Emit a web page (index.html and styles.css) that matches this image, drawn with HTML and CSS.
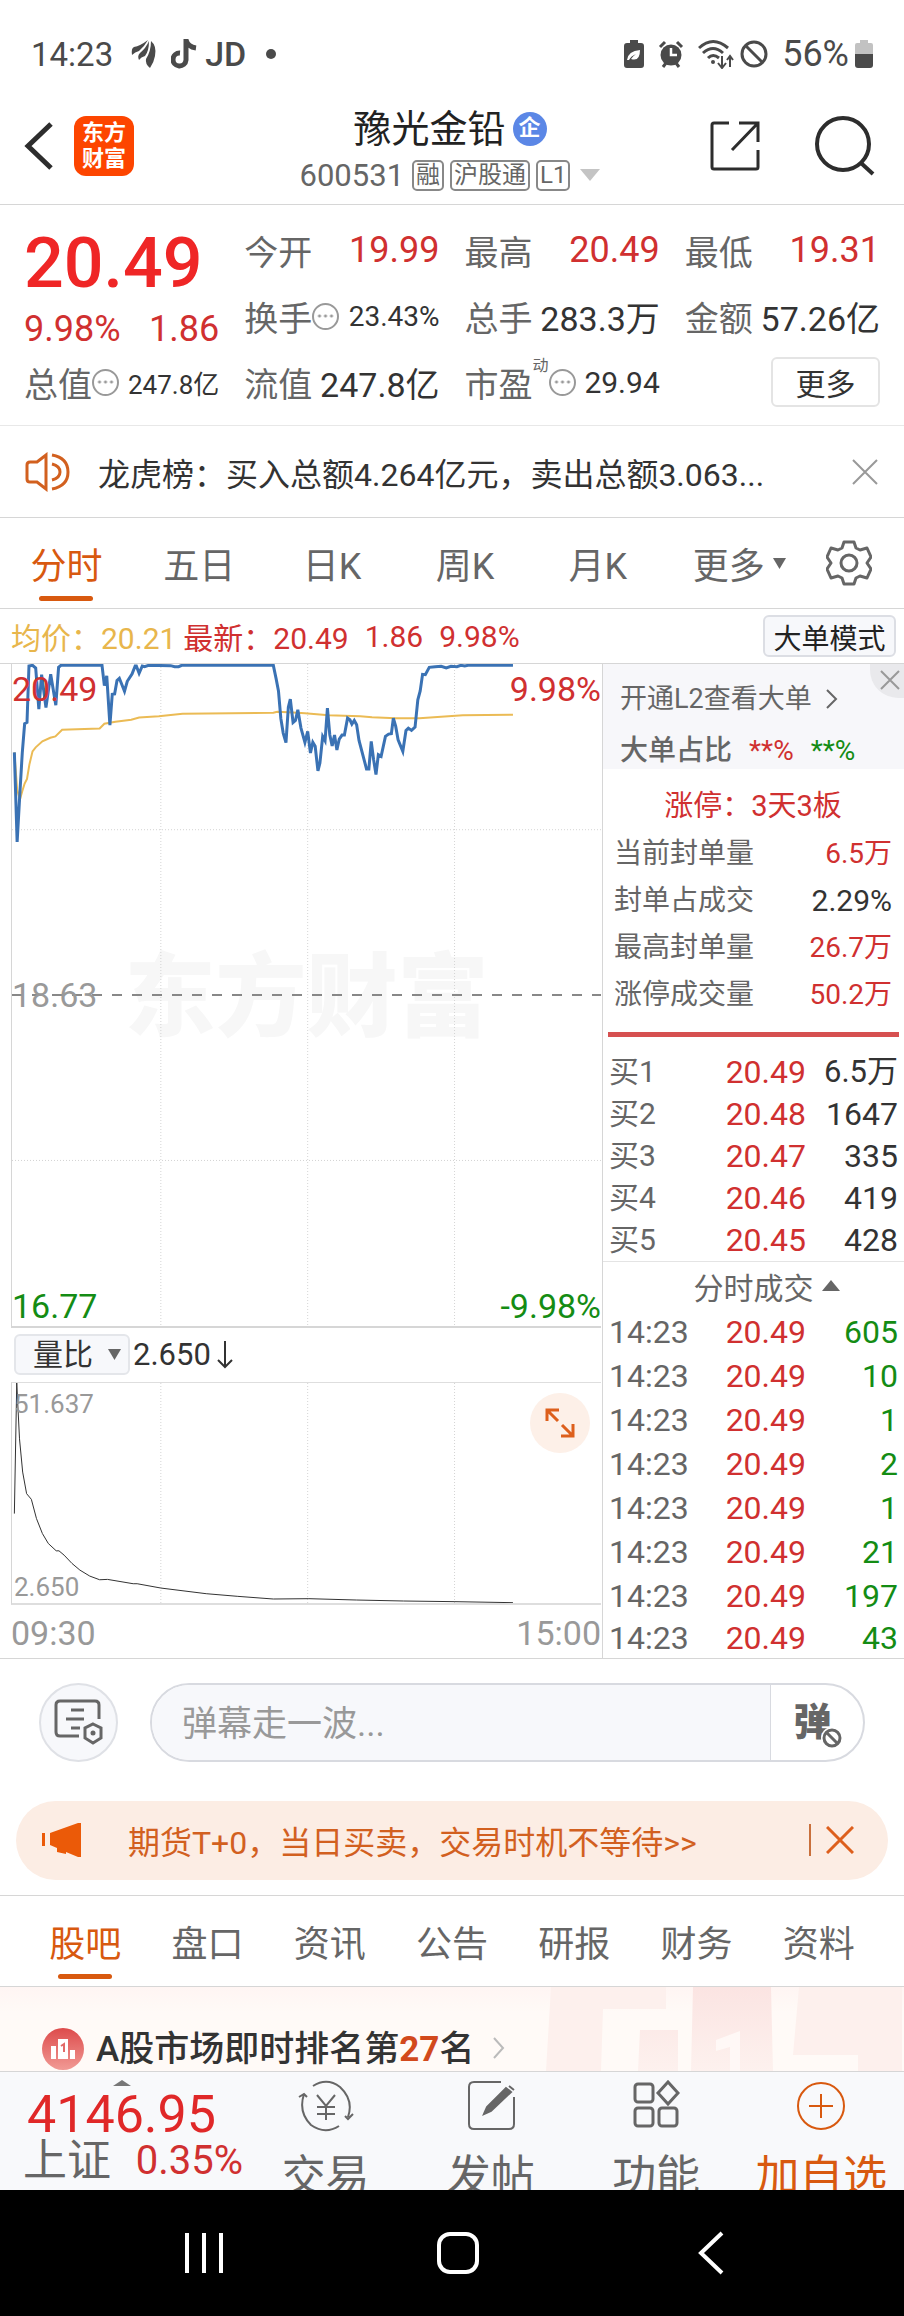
FILE: index.html
```html
<!DOCTYPE html>
<html lang="zh-CN">
<head>
  <meta charset="utf-8">
  <meta name="viewport" content="width=device-width, initial-scale=1">
  <title>豫光金铅 600531</title>
  <link rel="stylesheet" href="styles.css">
</head>
<body>
  <div class="status-bar">
    <span>14:23</span>
    <svg class="st-wing" width="26" height="30" viewBox="0 0 26 30" fill="#4a4a4a"><path d="M1 16Q0 9 3 8Q9 7 17 1Q13 8 8 12Q4 13 1 16zM8 21Q6 17 9 14Q15 9 18 2Q18 12 14 17Q10 18 8 21zM19 29Q14 25 15 20Q20 12 20 2Q26 7 24 17Q23 23 19 29z"/></svg>
    <svg class="st-note" width="26" height="30" viewBox="0 0 26 30" fill="none" stroke="#4a4a4a" stroke-width="5"><path d="M15 0v21a6.500 6.500 0 1 1-6-7M15 1q2 7 10 8"/></svg>
    <b class="st-jd">JD</b>
    <span class="st-dot"></span>
    <div class="status-right">
      <svg width="20" height="28" viewBox="0 0 20 28"><path d="M6 0h8v3h3q3 0 3 3v19q0 3-3 3H3q-3 0-3-3V6q0-3 3-3h3z" fill="#4a4a4a"/><path d="M3 20q1-9 13-10q0 12-9 9q2-3 5-5q-5 2-7 6z" fill="#fff"/></svg>
      <svg width="26" height="28" viewBox="0 0 26 28"><circle cx="13" cy="15" r="10.500" fill="#4a4a4a"/><path d="M2 7l5-5M24 7l-5-5M5 27l3-4M21 27l-3-4" stroke="#4a4a4a" stroke-width="3"/><path d="M13 8v7h6" stroke="#fff" stroke-width="2.500" fill="none"/></svg>
      <svg width="36" height="30" viewBox="0 0 36 30" fill="none" stroke="#4a4a4a" stroke-width="3"><path d="M1 9q14-13 29 0M5 14q10-9 20 0M10 19q5-5 11 0"/><circle cx="15" cy="23" r="2" fill="#4a4a4a" stroke="none"/><path d="M24 17v11M20 24l4 5 4-5M32 28V17M29 21l3-4 3 4" stroke-width="2"/></svg>
      <svg class="st-ban" width="28" height="28" viewBox="0 0 28 28" fill="none" stroke="#4a4a4a" stroke-width="3"><circle cx="14" cy="14" r="12"/><path d="M6 6l16 16"/></svg>
      <span class="st-pct">56%</span>
      <svg width="18" height="28" viewBox="0 0 18 28"><path d="M5 0h8v3h3q2 0 2 2v9H0V5q0-2 2-2h3z" fill="#c2c2c2"/><path d="M0 14h18v11q0 3-3 3H3q-3 0-3-3z" fill="#4a4a4a"/></svg>
    </div>
  </div>

  <header class="header">
    <div class="header-side">
      <button class="icon-btn" aria-label="返回"><svg width="30" height="50" viewBox="0 0 30 50" fill="none" stroke="#2d2d2d" stroke-width="5"><path d="M27 3L4 25l23 22"/></svg></button>
      <a class="logo" href="#">东方<br>财富</a>
    </div>
    <div class="header-title">
      <h1>豫光金铅<span class="badge">企</span></h1>
      <div class="code-row">600531<span class="tag">融</span><span class="tag">沪股通</span><span class="tag">L1</span>
        <svg class="code-caret" width="20" height="12" viewBox="0 0 20 12"><path d="M0 0h20L10 12z" fill="#c4c4c4"/></svg>
      </div>
    </div>
    <div class="header-side header-right">
      <button class="icon-btn" aria-label="分享"><svg width="50" height="50" viewBox="0 0 50 50" fill="none" stroke="#2d2d2d" stroke-width="3"><path d="M19 2H4q-2 0-2 2v42q0 2 2 2h42q2 0 2-2V29M29 2h19v19M48 2L22 29"/></svg></button>
      <button class="icon-btn" aria-label="搜索"><svg width="62" height="60" viewBox="0 0 62 60" fill="none" stroke="#2d2d2d" stroke-width="4"><circle cx="29" cy="28" r="26"/><path d="M47 47l12 11"/></svg></button>
    </div>
  </header>

  <section class="quote">
    <div class="quote-main">
      <div class="price">20.49</div>
      <div class="change"><span>9.98%</span><span>1.86</span></div>
    </div>
    <div class="cell"><span>今开</span><b class="red">19.99</b></div>
    <div class="cell"><span>最高</span><b class="red">20.49</b></div>
    <div class="cell"><span>最低</span><b class="red">19.31</b></div>
    <div class="cell"><span>换手<i class="info"></i></span><b class="small">23.43%</b></div>
    <div class="cell"><span>总手</span><b class="mid">283.3万</b></div>
    <div class="cell"><span>金额</span><b class="mid">57.26亿</b></div>
    <div class="cell"><span>总值<i class="info"></i></span><b class="tiny">247.8亿</b></div>
    <div class="cell"><span>流值</span><b class="mid">247.8亿</b></div>
    <div class="cell"><span>市盈<sup>动</sup><i class="info"></i></span><b class="pe">29.94</b></div>
    <div class="cell cell-more"><button class="more-btn">更多</button></div>
  </section>

  <div class="notice">
    <svg width="46" height="40" viewBox="0 0 46 40" fill="none" stroke="#d2601f" stroke-width="3"><path d="M21 3v34l-9-7H5q-3 0-3-3V13q0-3 3-3h7zM27 3q16 3 16 17T27 37M27 12q8 2 8 8t-8 8"/></svg>
    <a href="#">龙虎榜：买入总额4.264亿元，卖出总额3.063...</a>
    <button class="icon-btn" aria-label="关闭"><svg width="26" height="26" viewBox="0 0 26 26" stroke="#999" stroke-width="2"><path d="M1 1l24 24M25 1L1 25"/></svg></button>
  </div>

  <nav class="period-tabs">
    <button class="tab active">分时</button>
    <button class="tab">五日</button>
    <button class="tab">日K</button>
    <button class="tab">周K</button>
    <button class="tab">月K</button>
    <button class="tab tab-more">更多<svg width="13" height="11" viewBox="0 0 13 11"><path d="M0 0h13L6.500 11z" fill="#666"/></svg></button>
    <button class="tab-gear" aria-label="设置"><svg width="46" height="46" viewBox="0 0 46 46" fill="none" stroke="#666" stroke-width="3" stroke-linejoin="round"><path d="M18 2h10l2 6 4 2 7-2 4 9-4 6 4 6-4 9-7-2-4 2-2 6H18l-2-6-4-2-7 2-4-9 4-6-4-6 4-9 7 2 4-2z"/><circle cx="23" cy="23" r="8"/></svg></button>
  </nav>

  <div class="avg-row">
    <span class="yellow">均价：20.21</span>
    <span class="red">最新：20.49</span>
    <span class="red">1.86</span>
    <span class="red">9.98%</span>
    <button class="mode-btn">大单模式</button>
  </div>

  <main class="market">
    <div class="charts">
      <div class="chart price-chart">
        <span class="watermark">东方财富</span>
        <svg class="plot" viewBox="28 72 1492 1992" preserveAspectRatio="none" fill="none">
          <g class="grid-lines">
            <path d="M405 72V2064M777 72V2064M1149 72V2064M28 571H1520M28 1567H1520"/>
          </g>
          <path class="base-line" d="M28 1069H1520"/>
          <polyline class="avg-line" points="34,338 41,450 48,480 54,455 60,432 66,418 72,375 80,335 88,323 105,305 125,294 138,290 155,270 250,266 262,252 290,246 330,240 350,233 400,229 460,222 690,219 700,216 740,218 770,220 830,226 910,229 940,232 1000,235 1060,235 1170,226 1297,225"/>
          <polyline class="price-line" points="34,338 41,608 48,460 54,340 60,252 66,248 71,78 80,76 88,84 96,208 103,104 114,203 126,103 139,196 146,82 152,76 256,76 262,137 268,108 276,256 282,163 288,162 294,122 300,115 313,154 320,124 332,102 340,78 343,78 350,100 358,78 364,80 374,76 430,77 440,80 450,80 458,76 690,76 697,116 703,153 709,236 715,280 722,309 728,202 733,178 740,248 746,242 752,210 760,265 770,308 777,275 784,340 790,308 796,320 803,394 808,370 815,290 821,303 827,205 833,285 839,319 845,286 851,331 857,298 864,286 870,286 878,235 884,240 889,253 895,242 901,255 907,302 926,388 932,388 938,305 944,360 950,405 956,345 963,350 974,290 982,283 989,282 994,235 1000,260 1006,300 1018,335 1026,272 1032,265 1040,272 1049,262 1056,180 1062,153 1068,103 1075,104 1085,82 1100,80 1115,79 1128,84 1140,79 1155,80 1165,76 1175,78 1183,76 1297,76"/>
        </svg>
        <span class="axis top-left red">20.49</span>
        <span class="axis top-right red">9.98%</span>
        <span class="axis mid-left grey">18.63</span>
        <span class="axis bottom-left green">16.77</span>
        <span class="axis bottom-right green">-9.98%</span>
      </div>
      <div class="indicator">
        <label class="select-wrap">
          <select aria-label="指标"><option>量比</option></select>
          <svg width="13" height="11" viewBox="0 0 13 11"><path d="M0 0h13L6.500 11z" fill="#666"/></svg>
        </label>
        <span>2.650</span>
        <svg width="16" height="28" viewBox="0 0 16 28" fill="none" stroke="#333" stroke-width="2"><path d="M8 0v26M1 19l7 7 7-7"/></svg>
      </div>
      <div class="chart volume-chart">
        <svg class="plot" viewBox="28 312 1492 662" preserveAspectRatio="none" fill="none">
          <g class="grid-lines"><path d="M405 312V974M777 312V974M1149 312V974"/></g>
          <polyline class="ratio-line" points="34,705 40,312 47,480 55,580 65,645 77,662 90,720 105,765 120,795 140,817 147,817 160,830 180,855 200,875 225,893 250,904 270,903 335,916 345,916 405,929 520,946 600,954 690,962 780,961 900,965 1020,968 1150,970 1297,973"/>
        </svg>
        <span class="axis-sm top-left">51.637</span>
        <span class="axis-sm bottom-left">2.650</span>
        <button class="expand" aria-label="放大"><svg width="30" height="30" viewBox="0 0 30 30" fill="none" stroke="#dd5f1c" stroke-width="3"><path d="M2 13V2h12M2 2l11 11M17 17l11 11M28 16v12H16"/></svg></button>
      </div>
      <div class="time-axis"><span>09:30</span><span>15:00</span></div>
    </div>

    <aside class="side">
      <div class="l2">
        <a href="#">开通L2查看大单<svg width="12" height="20" viewBox="0 0 12 20" fill="none" stroke="#666" stroke-width="2"><path d="M1 1l9 9-9 9"/></svg></a>
        <div class="ratio"><strong>大单占比</strong><span class="red">**%</span><span class="green">**%</span></div>
        <button class="l2-close" aria-label="关闭"><svg width="20" height="20" viewBox="0 0 20 20" stroke="#999" stroke-width="2"><path d="M1 1l18 18M19 1L1 19"/></svg></button>
      </div>
      <div class="limit">
        <h2>涨停：3天3板</h2>
        <dl>
          <div><dt>当前封单量</dt><dd class="red">6.5万</dd></div>
          <div><dt>封单占成交</dt><dd class="pct">2.29%</dd></div>
          <div><dt>最高封单量</dt><dd class="red">26.7万</dd></div>
          <div><dt>涨停成交量</dt><dd class="red">50.2万</dd></div>
        </dl>
      </div>
      <table class="bids">
        <tr><th>买1</th><td class="red">20.49</td><td class="wan">6.5万</td></tr>
        <tr><th>买2</th><td class="red">20.48</td><td>1647</td></tr>
        <tr><th>买3</th><td class="red">20.47</td><td>335</td></tr>
        <tr><th>买4</th><td class="red">20.46</td><td>419</td></tr>
        <tr><th>买5</th><td class="red">20.45</td><td>428</td></tr>
      </table>
      <button class="ticks-head">分时成交<svg width="18" height="11" viewBox="0 0 18 11"><path d="M9 0l9 11H0z" fill="#666"/></svg></button>
      <table class="ticks">
        <tr><th>14:23</th><td class="red">20.49</td><td class="green">605</td></tr>
        <tr><th>14:23</th><td class="red">20.49</td><td class="green">10</td></tr>
        <tr><th>14:23</th><td class="red">20.49</td><td class="green">1</td></tr>
        <tr><th>14:23</th><td class="red">20.49</td><td class="green">2</td></tr>
        <tr><th>14:23</th><td class="red">20.49</td><td class="green">1</td></tr>
        <tr><th>14:23</th><td class="red">20.49</td><td class="green">21</td></tr>
        <tr><th>14:23</th><td class="red">20.49</td><td class="green">197</td></tr>
        <tr><th>14:23</th><td class="red">20.49</td><td class="green">43</td></tr>
      </table>
    </aside>
  </main>

  <div class="comment">
    <button class="comment-set" aria-label="弹幕设置"><svg width="50" height="46" viewBox="0 0 50 46" fill="none" stroke="#666" stroke-width="3"><path d="M25 37H6q-4 0-4-4V6q0-4 4-4h35q4 0 4 4v14M17 11h13M12 20h18M17 29h9"/><path d="M39 25l8 4v10l-8 5-8-5V29z"/><circle cx="39" cy="34" r="2.500" fill="#666" stroke="none"/></svg></button>
    <div class="comment-box">
      <input type="text" placeholder="弹幕走一波..." aria-label="弹幕">
      <button aria-label="关闭弹幕"><span class="dan">弹</span><svg class="dan-off" width="22" height="22" viewBox="0 0 22 22" fill="#fff"><circle cx="11" cy="11" r="11"/><g stroke="#666" stroke-width="3"><circle cx="11" cy="11" r="8"/><path d="M6 6l10 10"/></g></svg></button>
    </div>
  </div>

  <div class="promo">
    <svg width="40" height="34" viewBox="0 0 40 34" fill="#eb5a08"><path d="M0 10h3v13H0zM8 10L36 0h3v34h-3l-12-5v2l-9-2v-4l-7-3z"/></svg>
    <a href="#">期货T+0，当日买卖，交易时机不等待&gt;&gt;</a>
    <button class="icon-btn" aria-label="关闭"><svg width="28" height="28" viewBox="0 0 28 28" stroke="#dd5f1c" stroke-width="3"><path d="M1 1l26 26M27 1L1 27"/></svg></button>
  </div>

  <nav class="info-tabs">
    <button class="tab active">股吧</button>
    <button class="tab">盘口</button>
    <button class="tab">资讯</button>
    <button class="tab">公告</button>
    <button class="tab">研报</button>
    <button class="tab">财务</button>
    <button class="tab">资料</button>
  </nav>

  <a class="rank" href="#">
    <svg class="rank-bg" width="358" height="84" viewBox="0 0 358 84">
      <defs><linearGradient id="podium" x1="0" y1="0" x2="0" y2="1"><stop offset="0" stop-color="#fbe4e2"/><stop offset="1" stop-color="#fdf1ee"/></linearGradient></defs>
      <path d="M5 0h115v22H57L55 84H0zM253 0h103v84h-44V68h-65z" fill="#fdf0ed"/>
      <path d="M94 43h38v41H92zM147 0h78l2 84h-82z" fill="url(#podium)"/>
      <path d="M170 53l24-9v40h-10V60l-14 4z" fill="#fff8f6"/>
    </svg>
    <svg class="rank-icon" width="42" height="42" viewBox="0 0 42 42">
      <defs><linearGradient id="dot" x1="0" y1="0" x2="0" y2="1"><stop offset="0" stop-color="#dd4b4b"/><stop offset="1" stop-color="#f19a95"/></linearGradient></defs>
      <circle cx="21" cy="21" r="21" fill="url(#dot)"/>
      <path d="M9 18h5v13H9zM16 11h10v20H16zM28 22h5v9h-5z" fill="#fff"/>
      <path d="M19 18l3-2v8" stroke="#e26a68" stroke-width="2" fill="none"/>
    </svg>
    <span>A股市场即时排名第<em>27</em>名</span>
    <svg width="12" height="22" viewBox="0 0 12 22" fill="none" stroke="#bbb" stroke-width="2"><path d="M1 1l9 10-9 10"/></svg>
  </a>

  <footer class="toolbar">
    <a class="index" href="#">
      <svg width="18" height="6" viewBox="0 0 18 6"><path d="M9 0l9 6H0z" fill="#777"/></svg>
      <span class="index-value">4146.95</span>
      <span class="index-row"><span>上证</span><b>0.35%</b></span>
    </a>
    <button class="tool"><svg width="58" height="52" viewBox="0 0 58 52" fill="none" stroke="#666" stroke-width="2"><path d="M16 6Q30-3 43 7Q57 20 51 37M42 46Q28 55 14 45Q1 32 7 14M2 17l5-3 3 3M48 36l3 3 5-5M20 15l9 11 9-11M29 26v14M20 27h18M20 34h18"/></svg>交易</button>
    <button class="tool"><svg width="50" height="52" viewBox="0 0 50 52" fill="none" stroke="#666" stroke-width="2"><path d="M35 2H8Q3 2 3 7v37q0 5 5 5h35q5 0 5-5V17"/><path d="M43 6l5 4M18 34l3-7L40 8l5 4-20 19z" fill="#666"/></svg>发帖</button>
    <button class="tool"><svg width="48" height="52" viewBox="0 0 48 52" fill="none" stroke="#666" stroke-width="3"><rect x="3" y="4" width="18" height="18" rx="3"/><rect x="3" y="28" width="18" height="18" rx="3"/><rect x="27" y="28" width="18" height="18" rx="3"/><path d="M36 2l10 11-10 11-10-11z"/></svg>功能</button>
    <button class="tool tool-add"><svg width="50" height="52" viewBox="0 0 50 52" fill="none" stroke="#d8590f" stroke-width="2"><circle cx="25" cy="26" r="23"/><path d="M25 14v24M13 26h24"/></svg>加自选</button>
  </footer>

  <div class="system-nav">
    <button aria-label="最近任务"><svg width="38" height="42" viewBox="0 0 38 42" stroke="#fff" stroke-width="4"><path d="M2 1v40M19 1v40M36 1v40"/></svg></button>
    <button aria-label="主页"><svg width="42" height="42" viewBox="0 0 42 42" fill="none" stroke="#fff" stroke-width="4"><rect x="2" y="2" width="38" height="38" rx="11"/></svg></button>
    <button aria-label="返回"><svg width="26" height="44" viewBox="0 0 26 44" fill="none" stroke="#fff" stroke-width="4"><path d="M24 2L3 22l21 20"/></svg></button>
  </div>
</body>
</html>
```
FILE: styles.css
```css
* {
  box-sizing: border-box;
}
body {
  margin: 0;
  font-family: Roboto, "Noto Sans CJK SC", sans-serif;
  background-color: #fff;
  color: #333;
  font-size: 30px;
}
button, input, select {
  font: inherit;
  color: inherit;
  background: none;
  border: none;
  padding: 0;
  margin: 0;
}
a {
  color: inherit;
  text-decoration: none;
}
svg {
  display: block;
  flex: none;
}
h1, h2, dl, dd {
  margin: 0;
  font-weight: normal;
}
.red { color: #d03030; }
.green { color: #148c14; }
.grey { color: #999; }
.yellow { color: #e8b64c; }

/* 系统状态栏 */
.status-bar {
  display: flex;
  align-items: center;
  height: 108px;
  padding: 0 31px;
  font-size: 33px;
  color: #4a4a4a;
}
.st-wing { margin-left: 18px; }
.st-note { margin-left: 14px; }
.st-jd { margin-left: 8px; font-size: 34px; font-weight: 500; }
.st-dot {
  width: 10px;
  height: 10px;
  margin-left: 20px;
  border-radius: 50%;
  background-color: #4a4a4a;
}
.status-right {
  display: flex;
  align-items: center;
  gap: 14px;
  margin-left: auto;
}
.st-ban { margin-left: -8px; }
.st-pct {
  margin-right: -8px;
  font-size: 36px;
}

/* 标题栏 */
.header {
  display: flex;
  align-items: center;
  justify-content: space-between;
  height: 97px;
  padding: 0 28px 20px 24px;
  border-bottom: 1px solid #d6d6d6;
}
.header-side {
  display: flex;
  align-items: center;
  gap: 20px;
  width: 166px;
}
.header-right {
  justify-content: flex-end;
  gap: 54px;
}
.logo {
  width: 60px;
  height: 60px;
  padding-top: 4px;
  border-radius: 12px;
  background-color: #fd4500;
  color: #fff;
  font-size: 22px;
  font-weight: bold;
  line-height: 26px;
  text-align: center;
}
.header-title {
  padding-top: 12px;
  text-align: center;
}
.header-title h1 {
  display: flex;
  align-items: center;
  justify-content: center;
  gap: 7px;
  font-size: 38px;
  line-height: 46px;
  color: #222;
}
.badge {
  width: 34px;
  height: 34px;
  border-radius: 50%;
  background-color: #5b87e6;
  color: #fff;
  font-size: 22px;
  font-weight: bold;
  line-height: 32px;
}
.code-row {
  display: flex;
  align-items: center;
  gap: 6px;
  height: 46px;
  font-size: 31px;
  color: #666;
}
.tag {
  height: 31px;
  padding: 0 2px;
  border: 2px solid #888;
  border-radius: 5px;
  font-size: 24px;
  line-height: 27px;
}
.code-row .tag:first-of-type { margin-left: 2px; }
.code-caret { margin-left: 4px; }

/* 报价 */
.quote {
  display: grid;
  grid-template-columns: repeat(4, minmax(0, 1fr));
  grid-auto-rows: 66px;
  column-gap: 25px;
  padding: 12px 24px 10px;
  border-bottom: 1px solid #e8e8e8;
}
.quote-main {
  grid-row: span 2;
}
.price {
  font-size: 70px;
  font-weight: 500;
  line-height: 92px;
  color: #ef2626;
}
.change {
  display: flex;
  justify-content: space-between;
  font-size: 36px;
  line-height: 40px;
  color: #d03030;
}
.cell {
  display: flex;
  align-items: center;
  justify-content: space-between;
  white-space: nowrap;
}
.cell span {
  display: flex;
  align-items: center;
  font-size: 34px;
  color: #666;
}
.cell b {
  font-size: 36px;
  font-weight: normal;
}
.cell .mid { font-size: 34px; }
.cell .small { font-size: 28px; }
.cell .tiny { font-size: 26px; }
.cell .pe { font-size: 30px; }
.cell sup {
  align-self: flex-start;
  font-size: 16px;
  line-height: 16px;
}
.info {
  width: 27px;
  height: 27px;
  border: 2px solid #999;
  border-radius: 50%;
  background: radial-gradient(circle, #999 1px, transparent 2px) center / 6px 6px repeat-x content-box;
  padding: 0 2px;
}
.cell-more { justify-content: flex-end; }
.more-btn {
  width: 109px;
  height: 50px;
  border: 2px solid #e4e4e4;
  border-radius: 6px;
  font-size: 30px;
}

.notice {
  display: flex;
  align-items: center;
  height: 92px;
  padding: 0 26px 0 25px;
  border-bottom: 1px solid #d6d6d6;
  font-size: 32px;
}
.notice a {
  flex: 1;
  margin-left: 27px;
}

/* 周期切换 */
.period-tabs, .info-tabs {
  display: flex;
  height: 91px;
  border-bottom: 1px solid #d6d6d6;
}
.period-tabs { padding-right: 20px; }
.info-tabs { padding: 0 24px; }
.tab {
  position: relative;
  flex: 133;
  font-size: 36px;
  color: #666;
}
.tab.active { color: #d8590f; }
.tab.active::after {
  content: "";
  position: absolute;
  left: 50%;
  bottom: 7px;
  width: 54px;
  height: 5px;
  margin-left: -27px;
  border-radius: 3px;
  background-color: #d8590f;
}
.tab-more {
  display: flex;
  flex: 150;
  align-items: center;
  justify-content: center;
  gap: 8px;
}
.tab-gear {
  display: flex;
  flex: 70;
  align-items: center;
  justify-content: center;
}

.avg-row {
  display: flex;
  align-items: center;
  gap: 16px;
  height: 55px;
  padding: 0 8px 0 11px;
  border-bottom: 1px solid #d6d6d6;
  font-size: 30px;
}
.avg-row .yellow { margin-right: -9px; }
.mode-btn {
  width: 133px;
  height: 42px;
  margin-left: auto;
  border: 2px solid #dcdee4;
  border-radius: 6px;
  background-color: #f7f8fb;
  font-size: 28px;
  color: #222;
}

/* 行情图 */
.market {
  display: flex;
  border-bottom: 1px solid #d6d6d6;
}
.charts {
  display: flex;
  flex: 1;
  flex-direction: column;
  min-width: 0;
  padding: 0 1px 0 11px;
}
.chart {
  position: relative;
  border-left: 1px solid #d6d6d6;
}
.price-chart {
  flex: 1;
  border-bottom: 2px solid #d6d6d6;
}
.volume-chart {
  height: 223px;
  border-top: 1px solid #dedede;
  border-bottom: 2px solid #dedede;
}
.plot {
  position: absolute;
  width: 100%;
  height: 100%;
}
.plot path, .plot polyline { vector-effect: non-scaling-stroke; }
.grid-lines {
  stroke: #d4d4d4;
  stroke-dasharray: 1 2;
}
.base-line {
  stroke: #888;
  stroke-width: 2;
  stroke-dasharray: 10 10;
}
.avg-line {
  stroke: #ebbb55;
  stroke-width: 2;
}
.price-line {
  stroke: #3a72b4;
  stroke-width: 3;
}
.ratio-line { stroke: #333; }
.watermark {
  position: absolute;
  top: 50%;
  left: 0;
  width: 100%;
  font-size: 91px;
  font-weight: 900;
  line-height: 90px;
  margin-top: -42px;
  text-align: center;
  color: #f7f7f7;
}
.axis, .axis-sm {
  position: absolute;
  font-size: 34px;
  line-height: 40px;
}
.axis-sm {
  font-size: 26px;
  line-height: 32px;
  color: #999;
}
.top-left { top: 5px; left: 0; }
.top-right { top: 5px; right: 0; }
.mid-left { top: 50%; left: 0; margin-top: -20px; }
.bottom-left { bottom: 0; left: 0; }
.bottom-right { bottom: 0; right: 0; }
.axis-sm.top-left, .axis-sm.bottom-left { left: 2px; }
.indicator {
  display: flex;
  align-items: center;
  gap: 3px;
  height: 54px;
  padding-left: 3px;
  font-size: 31px;
}
.indicator > svg { margin-left: 3px; }
.select-wrap { position: relative; }
.select-wrap select {
  display: block;
  width: 116px;
  height: 41px;
  padding-left: 17px;
  border: 2px solid #e4e6ea;
  border-radius: 6px;
  background-color: #f7f8fb;
  appearance: none;
  font-size: 30px;
  line-height: 36px;
}
.select-wrap svg {
  position: absolute;
  top: 15px;
  right: 9px;
}
.expand {
  position: absolute;
  top: 10px;
  right: 11px;
  display: flex;
  align-items: center;
  justify-content: center;
  width: 60px;
  height: 60px;
  border-radius: 50%;
  background-color: #fdf0e8;
}
.time-axis {
  display: flex;
  justify-content: space-between;
  height: 53px;
  font-size: 34px;
  line-height: 56px;
  color: #999;
}

/* 右侧盘口 */
.side {
  width: 302px;
  border-left: 1px solid #d6d6d6;
}
.l2 {
  position: relative;
  height: 105px;
  padding: 9px 0 0 17px;
  background-color: #f7f7fa;
  color: #666;
}
.l2 a {
  display: flex;
  align-items: center;
  gap: 14px;
  font-size: 27px;
  line-height: 52px;
}
.ratio {
  display: flex;
  gap: 17px;
  font-size: 28px;
  line-height: 52px;
}
.ratio strong { font-weight: 500; }
.l2-close {
  position: absolute;
  top: 0;
  right: 0;
  width: 34px;
  height: 34px;
  padding: 5px 0 0 10px;
  border-bottom-left-radius: 28px;
  background-color: #e9e9ec;
}
.l2-close svg { margin-bottom: 8px; }
.limit {
  margin: 0 5px;
  padding: 13px 7px 14px 6px;
  border-bottom: 5px solid #d65050;
}
.limit h2 {
  font-size: 29px;
  line-height: 48px;
  text-align: center;
  color: #d03030;
}
.limit dl div {
  display: flex;
  justify-content: space-between;
  font-size: 28px;
  line-height: 47px;
}
.limit dt { color: #666; }
.limit .pct { font-size: 30px; }
.bids, .ticks {
  width: 100%;
  border-collapse: collapse;
  font-size: 32px;
}
.bids {
  margin-top: 14px;
  border-bottom: 1px solid #e4e4e4;
}
.bids tr { height: 42px; }
.ticks tr { height: 44px; }
.ticks tr:last-child { height: 40px; }
.side th, .side td {
  padding: 0;
  font-weight: normal;
  line-height: 40px;
  text-align: right;
}
.side th {
  width: 92px;
  padding-left: 6px;
  text-align: left;
  color: #666;
}
.bids th { font-size: 30px; }
.side td:nth-child(2) { width: 111px; }
.side td:last-child { padding-right: 6px; }
.side .wan { font-size: 31px; }
.ticks-head {
  display: flex;
  align-items: center;
  justify-content: center;
  gap: 8px;
  width: 100%;
  height: 48px;
  padding-left: 26px;
  font-size: 30px;
  color: #666;
}

/* 弹幕 */
.comment {
  display: flex;
  gap: 32px;
  padding: 24px 39px 39px;
}
.comment-set {
  display: flex;
  align-items: center;
  justify-content: center;
  width: 79px;
  height: 79px;
  border: 2px solid #dfe1e6;
  border-radius: 50%;
  background-color: #f7f8fb;
}
.comment-box {
  display: flex;
  flex: 1;
  height: 79px;
  border: 2px solid #d8dae0;
  border-radius: 40px;
  overflow: hidden;
}
.comment-box input {
  flex: 1;
  min-width: 0;
  padding: 4px 30px 0;
  background-color: #f7f8fb;
  font-size: 35px;
}
.comment-box input::placeholder { color: #999; }
.comment-box button {
  position: relative;
  width: 93px;
  padding-right: 9px;
  border-left: 1px solid #d8dae0;
  color: #666;
}
.dan {
  font-size: 38px;
  font-weight: 900;
  line-height: 72px;
}
.dan-off {
  position: absolute;
  right: 20px;
  bottom: 11px;
}

.promo {
  display: flex;
  align-items: center;
  height: 79px;
  margin: 0 16px 15px;
  padding: 0 34px 0 26px;
  border-radius: 40px;
  background-color: #fcede4;
  color: #d2601f;
  font-size: 32px;
}
.promo a {
  flex: 1;
  margin-left: 46px;
}
.promo button {
  padding: 2px 0 2px 15px;
  border-left: 2px solid #c9703c;
}
.info-tabs {
  border-top: 1px solid #d6d6d6;
  height: 92px;
}

.rank {
  position: relative;
  display: flex;
  align-items: flex-end;
  height: 84px;
  padding: 0 42px 1px;
  background: linear-gradient(#fff5f3, #fffaf7 30%);
  font-size: 35px;
  font-weight: 500;
  line-height: 40px;
}
.rank-bg {
  position: absolute;
  top: 0;
  right: 0;
}
.rank span { margin: 0 19px 0 12px; }
.rank svg:last-child { margin-bottom: 11px; }
.rank em {
  font-style: normal;
  font-weight: bold;
  color: #d2491c;
}

/* 底部工具栏 */
.toolbar {
  display: flex;
  height: 119px;
  border-top: 1px solid #d6d6d6;
  background-color: #f8f9fb;
  overflow: hidden;
}
.index {
  display: flex;
  flex-direction: column;
  align-items: center;
  width: 243px;
  padding-top: 8px;
}
.index-value {
  margin-top: 5px;
  font-size: 52px;
  line-height: 48px;
  color: #e02828;
}
.index-row {
  display: flex;
  justify-content: space-between;
  align-self: stretch;
  padding-left: 23px;
  font-size: 44px;
  line-height: 44px;
  color: #666;
}
.index-row b {
  font-size: 40px;
  font-weight: normal;
  color: #d03030;
}
.tool {
  display: flex;
  flex: 1;
  flex-direction: column;
  align-items: center;
  padding-top: 8px;
  font-size: 44px;
  line-height: 90px;
  color: #666;
}
.tool-add { color: #d8590f; }

.system-nav {
  display: flex;
  height: 126px;
  padding: 0 66px 0 77px;
  background-color: #000;
}
.system-nav button {
  display: flex;
  flex: 1;
  align-items: center;
  justify-content: center;
}
```
